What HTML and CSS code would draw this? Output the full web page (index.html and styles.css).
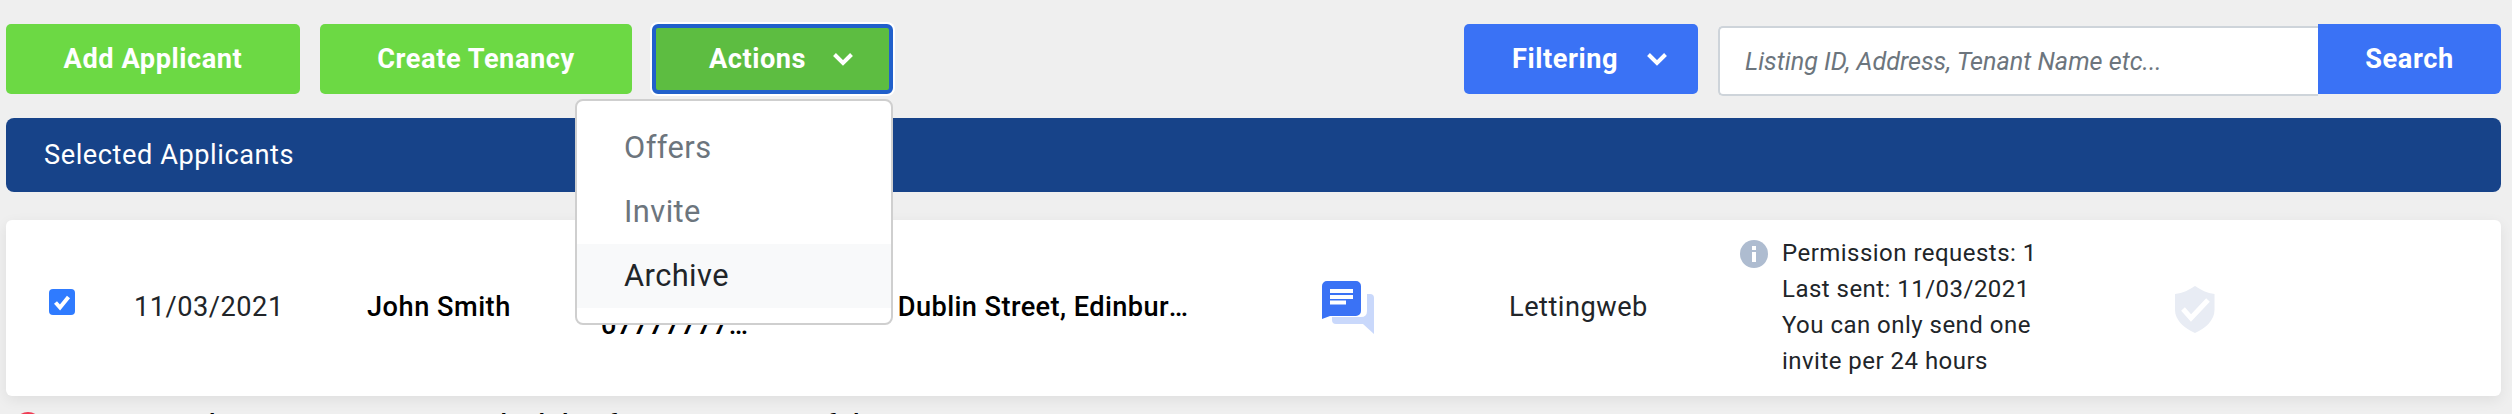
FILE: index.html
```html
<!DOCTYPE html>
<html lang="en">
<head>
<meta charset="utf-8">
<title>Applicants</title>
<link rel="stylesheet" href="styles.css">
</head>
<body>
<div class="page">
  <div class="toolbar">
    <button class="btn btn-green btn-add">Add Applicant</button>
    <button class="btn btn-green btn-create">Create Tenancy</button>
    <div class="actions-wrap">
      <button class="btn btn-actions">Actions
        <svg class="chev" width="22" height="15" viewBox="0 0 22 15"><path d="M2.500 2.500L11 11L19.500 2.500" fill="none" stroke="#fff" stroke-width="4"/></svg>
      </button>
      <div class="menu">
        <div class="menu-item">Offers</div>
        <div class="menu-item">Invite</div>
        <div class="menu-item active">Archive</div>
      </div>
    </div>
    <button class="btn btn-blue btn-filter">Filtering
      <svg class="chev" width="22" height="15" viewBox="0 0 22 15"><path d="M2.500 2.500L11 11L19.500 2.500" fill="none" stroke="#fff" stroke-width="4"/></svg>
    </button>
    <div class="search">
      <input class="search-input" type="text" placeholder="Listing ID, Address, Tenant Name etc...">
      <button class="btn btn-blue btn-search">Search</button>
    </div>
  </div>

  <div class="selected-bar">Selected Applicants</div>

  <div class="card">
    <div class="cell cell-check"><span class="checkbox"><svg width="26" height="26" viewBox="0 0 26 26"><path d="M6.500 13.500L11 18.500L19.500 8" fill="none" stroke="#fff" stroke-width="4"/></svg></span></div>
    <div class="cell cell-date">11/03/2021</div>
    <div class="cell cell-name">John Smith</div>
    <div class="cell cell-phone"><div class="clip">john@email.com</div><div class="clip">07777777777</div></div>
    <div class="cell cell-addr"><div class="clip">15 Dublin Street, Edinburgh</div></div>
    <div class="cell cell-chat">
      <svg width="52" height="53" viewBox="0 0 52 53">
        <path d="M45 13h3a4 4 0 0 1 4 4v36L41 43H14a4 4 0 0 1-4-4v-3h29q6 0 6-6z" fill="#c9d8fb"/>
        <path d="M5 0h29a5 5 0 0 1 5 5v25a5 5 0 0 1-5 5H8L0 38V5a5 5 0 0 1 5-5z" fill="#3a72f5"/>
        <path d="M8 8h23v4H8zM8 14h23v4H8zM8 19.500h16v4H8z" fill="#fff"/>
      </svg>
    </div>
    <div class="cell cell-source">Lettingweb</div>
    <div class="cell cell-perm">
      <svg class="info" width="28" height="28" viewBox="0 0 28 28"><circle cx="14" cy="14" r="14" fill="#aebcd0"/><path d="M12 6h4v4h-4zM12 12h4v10h-4z" fill="#fff"/></svg>
      <div class="perm-text">Permission requests: 1<br>Last sent: 11/03/2021<br>You can only send one<br>invite per 24 hours</div>
    </div>
    <div class="cell cell-shield">
      <svg width="40" height="47" viewBox="0 0 40 47"><path d="M20 0C26 4 32 7 39.500 8V24C39.500 34 31 42 20 47C9 42 0 34 0 24V8C8 7 14 4 20 0z" fill="#e8ecf4"/><path d="M8 23L16 32L33 14" fill="none" stroke="#fff" stroke-width="5"/></svg>
    </div>
  </div>

  <div class="notice"><span class="notice-dot"></span><span class="notice-text">Your tenant has no previous open eligibility for one or more of the properties</span></div>
</div>
</body>
</html>
```
FILE: styles.css
```css
* { box-sizing: border-box; }
html, body { margin: 0; height: 100%; overflow: hidden; background: #efefef; }
body { font-family: Roboto, "Liberation Sans", sans-serif; color: #212529; }
.page { padding: 24px 11px 0 6px; }

.toolbar { display: flex; align-items: flex-start; gap: 20px; height: 70px; }
.btn { height: 70px; border: 0; border-radius: 5px; color: #fff; font: 700 27.2px Roboto, sans-serif; letter-spacing: .55px; display: flex; align-items: center; justify-content: center; padding: 0; }
.btn-green { background: #6cd944; }
.btn-add { width: 294px; }
.btn-create { width: 312px; }
.actions-wrap { position: relative; }
.btn-actions { width: 241px; background: #5dbd41; border: 4px solid #2160cb; border-radius: 6px; box-shadow: 0 0 0 2px #fff; gap: 26px; padding-left: 18px; }
.btn-blue { background: #3a72f5; }
.btn-filter { width: 234px; margin-left: auto; gap: 28px; padding-left: 18px; }
.chev { display: block; }

.menu { position: absolute; top: 75px; right: 0; width: 318px; height: 226px; padding: 15px 0; background: #fff; border: 2px solid #cfcfcf; border-radius: 8px; z-index: 5; }
.menu-item { height: 64px; padding-left: 47px; display: flex; align-items: center; padding-bottom: 2px; font-size: 30.8px; letter-spacing: .45px; color: #6c757d; }
.menu-item.active { background: #f8f9fa; color: #212529; }

.search { display: flex; align-items: flex-start; }
.search-input { width: 600px; height: 70px; margin-top: 2px; padding: 0 25px; background: #fff; border: 2px solid #ced4da; border-right: 0; border-radius: 5px 0 0 5px; font: italic 400 25.2px Roboto, sans-serif; outline: 0; }
.search-input::placeholder { color: #6c757d; opacity: 1; }
.btn-search { width: 183px; border-radius: 0 6px 6px 0; }

.selected-bar { margin-top: 24px; height: 74px; padding-left: 38px; display: flex; align-items: center; background: #174389; border-radius: 8px; color: #fff; font-size: 27.2px; letter-spacing: .55px; }

.card { margin-top: 28px; height: 176px; padding-bottom: 2px; display: grid; grid-template-columns: 128px 233px 234px 258px 463px 187px 231px 435px 1fr; align-items: center; background: #fff; border-radius: 6px; box-shadow: 0 4px 14px rgba(0,0,0,.07); font-size: 27.2px; letter-spacing: .5px; }
.cell { min-width: 0; }
.cell-check { padding-left: 43px; }
.checkbox { display: block; width: 26px; height: 26px; margin-bottom: 10px; background: #2f7bff; border-radius: 4px; }
.checkbox svg, .cell-chat svg, .cell-shield svg { display: block; }
.cell-shield { padding-top: 5px; }
.cell-name { font-weight: 500; color: #000; }
.cell-phone { font-weight: 500; color: #000; line-height: 36px; }
.cell-addr { font-weight: 500; color: #000; width: 331px; letter-spacing: .4px; }
.clip { white-space: nowrap; overflow: hidden; text-overflow: ellipsis; }
.cell-phone .clip { width: 148px; }
.cell-perm { display: flex; gap: 14px; align-items: flex-start; font-size: 24px; letter-spacing: .47px; }
.info { flex: none; margin-top: 5px; }
.perm-text { line-height: 36px; }

.notice { margin-top: 16px; display: flex; gap: 14px; padding-left: 8px; font-size: 27.2px; letter-spacing: .5px; font-weight: 500; color: #000; white-space: nowrap; }
.notice-dot { flex: none; width: 28px; height: 28px; border-radius: 50%; background: #ef3b52; }
.notice-text { line-height: 26px; }
```
